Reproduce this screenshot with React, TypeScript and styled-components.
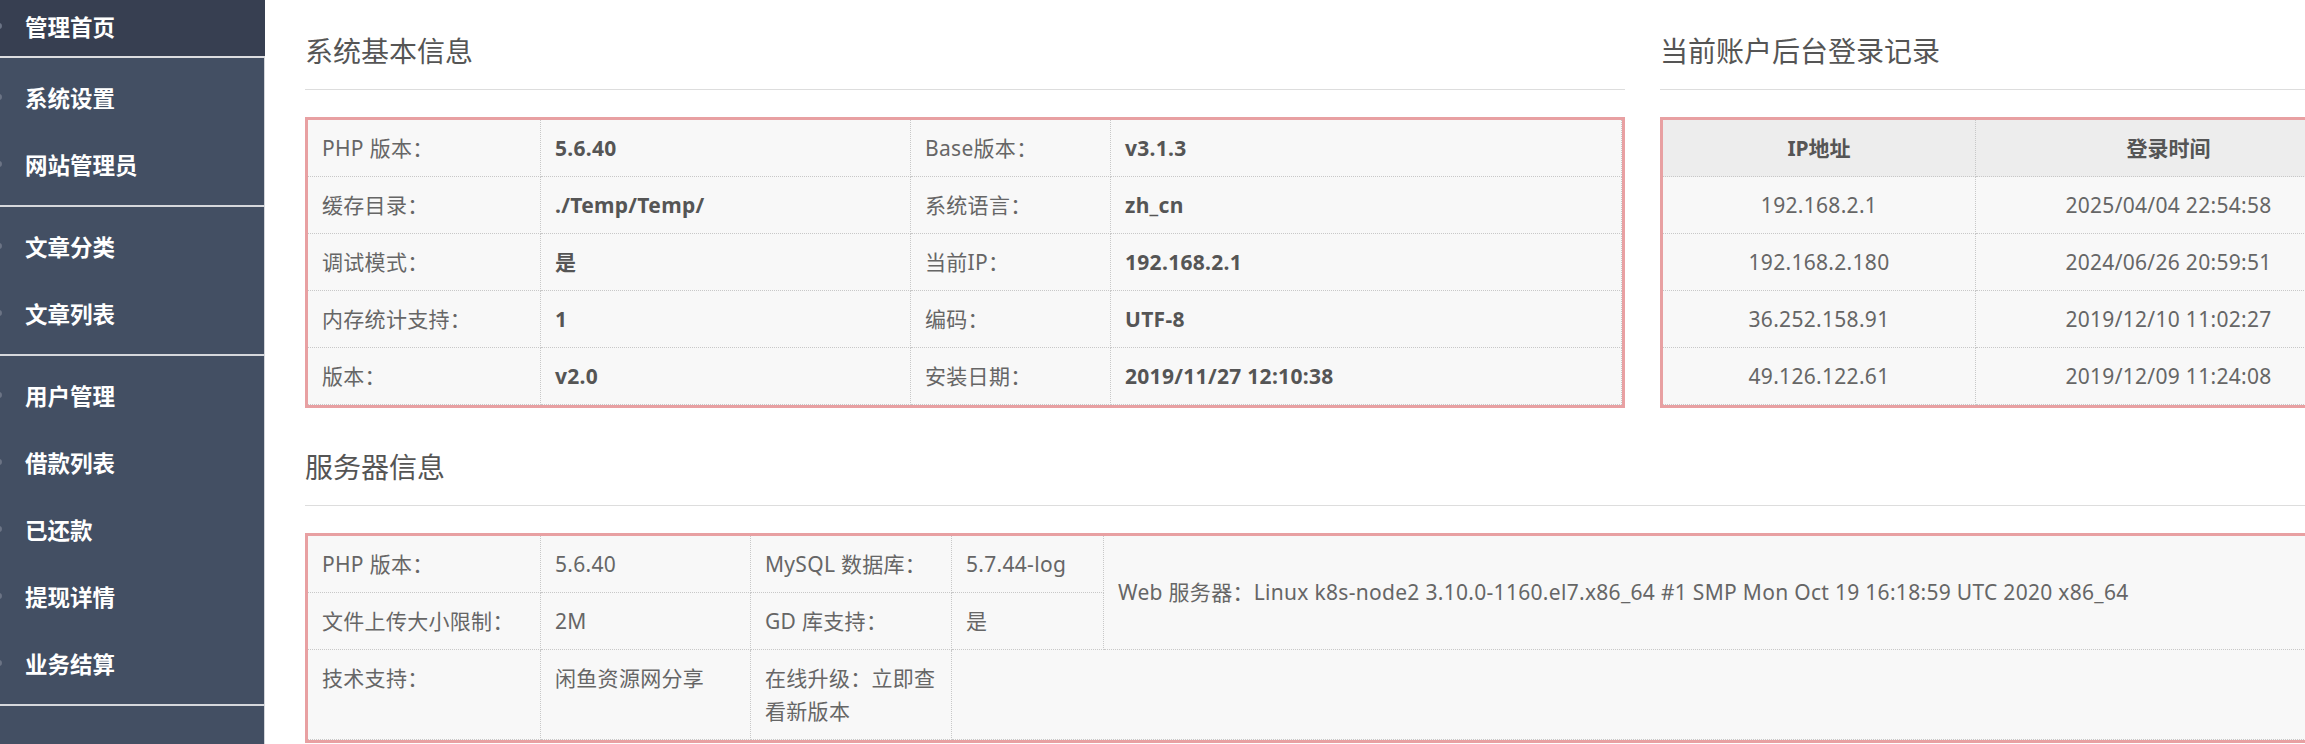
import React from 'react';
import styled, { createGlobalStyle } from 'styled-components';

const menuGroups = [
  ['系统设置', '网站管理员'],
  ['文章分类', '文章列表'],
  ['用户管理', '借款列表', '已还款', '提现详情', '业务结算'],
];

const sysInfo = [
  ['PHP 版本：', '5.6.40', 'Base版本：', 'v3.1.3'],
  ['缓存目录：', './Temp/Temp/', '系统语言：', 'zh_cn'],
  ['调试模式：', '是', '当前IP：', '192.168.2.1'],
  ['内存统计支持：', '1', '编码：', 'UTF-8'],
  ['版本：', 'v2.0', '安装日期：', '2019/11/27 12:10:38'],
];

const logins = [
  ['192.168.2.1', '2025/04/04 22:54:58'],
  ['192.168.2.180', '2024/06/26 20:59:51'],
  ['36.252.158.91', '2019/12/10 11:02:27'],
  ['49.126.122.61', '2019/12/09 11:24:08'],
];

const App = () => {
  return (
    <Page>
      <GlobalStyle />
      <Sidebar>
        <TopItem>
          <Stub />
          管理首页
        </TopItem>
        {menuGroups.map((group, i) => (
          <MenuGroup key={i}>
            {group.map((name) => (
              <MenuItem key={name}>
                <Stub />
                {name}
              </MenuItem>
            ))}
          </MenuGroup>
        ))}
      </Sidebar>

      <Main>
        <TopRow>
          <LeftCol>
            <Heading>系统基本信息</Heading>
            <InfoTable>
              <colgroup>
                <Col $w={233} />
                <Col $w={370} />
                <Col $w={200} />
                <col />
              </colgroup>
              <tbody>
                {sysInfo.map((row) => (
                  <tr key={row[0]}>
                    <Cell>{row[0]}</Cell>
                    <Cell $bold>{row[1]}</Cell>
                    <Cell>{row[2]}</Cell>
                    <Cell $bold>{row[3]}</Cell>
                  </tr>
                ))}
              </tbody>
            </InfoTable>
          </LeftCol>

          <RightCol>
            <Heading>当前账户后台登录记录</Heading>
            <InfoTable>
              <colgroup>
                <Col $w={313} />
                <col />
              </colgroup>
              <thead>
                <tr>
                  <HeadCell>IP地址</HeadCell>
                  <HeadCell>登录时间</HeadCell>
                </tr>
              </thead>
              <tbody>
                {logins.map((row) => (
                  <tr key={row[0]}>
                    <Cell $center>{row[0]}</Cell>
                    <Cell $center>{row[1]}</Cell>
                  </tr>
                ))}
              </tbody>
            </InfoTable>
          </RightCol>
        </TopRow>

        <ServerSection>
          <Heading>服务器信息</Heading>
          <InfoTable>
            <colgroup>
              <Col $w={233} />
              <Col $w={210} />
              <Col $w={201} />
              <Col $w={152} />
              <col />
            </colgroup>
            <tbody>
              <tr>
                <Cell>PHP 版本：</Cell>
                <Cell>5.6.40</Cell>
                <Cell>MySQL 数据库：</Cell>
                <Cell>5.7.44-log</Cell>
                <Cell rowSpan={2} $nowrap>
                  Web 服务器：Linux k8s-node2 3.10.0-1160.el7.x86_64 #1 SMP Mon Oct 19 16:18:59 UTC 2020 x86_64
                </Cell>
              </tr>
              <tr>
                <Cell>文件上传大小限制：</Cell>
                <Cell>2M</Cell>
                <Cell>GD 库支持：</Cell>
                <Cell>是</Cell>
              </tr>
              <tr>
                <Cell $top>技术支持：</Cell>
                <Cell $top>闲鱼资源网分享</Cell>
                <Cell $top>在线升级：立即查看新版本</Cell>
                <Cell colSpan={2} />
              </tr>
            </tbody>
          </InfoTable>
        </ServerSection>
      </Main>
    </Page>
  );
};

export default App;

const GlobalStyle = createGlobalStyle`
  html, body {
    margin: 0;
    padding: 0;
    overflow: hidden;
    background: #ffffff;
  }
  body {
    font-family: "Noto Sans", "Noto Sans CJK SC", sans-serif;
  }
`;

const Page = styled.div`
  display: flex;
  min-height: 100vh;
`;

const Sidebar = styled.aside`
  flex: 0 0 265px;
  background-color: #434f63;
  box-shadow: inset -1px 0 0 #d3d5da;
  overflow: hidden;
`;

const TopItem = styled.div`
  box-sizing: border-box;
  height: 58px;
  padding-bottom: 5px;
  display: flex;
  align-items: center;
  background-color: #373f51;
  border-bottom: 2px solid #dcdde0;
  color: #ffffff;
  font-family: "Noto Sans CJK SC", sans-serif;
  font-size: 22.5px;
  font-weight: 700;
`;

const MenuGroup = styled.div`
  padding: 8px 0 5px;
  border-bottom: 2px solid #d6d8dc;
`;

const MenuItem = styled.div`
  box-sizing: border-box;
  height: 67px;
  padding-bottom: 5px;
  display: flex;
  align-items: center;
  color: #ffffff;
  font-family: "Noto Sans CJK SC", sans-serif;
  font-size: 22.5px;
  font-weight: 700;
`;

const Stub = styled.span`
  width: 8px;
  height: 6px;
  border-radius: 3px;
  background-color: #6b7485;
  margin-left: -6px;
  margin-right: 23px;
`;

const Main = styled.main`
  flex: 1;
  min-width: 0;
  padding-left: 40px;
  overflow: hidden;
`;

const TopRow = styled.div`
  display: flex;
  gap: 35px;
  width: 2100px;
`;

const LeftCol = styled.section`
  flex: 0 0 1320px;
`;

const RightCol = styled.section`
  flex: 0 0 705px;
`;

const ServerSection = styled.section`
  width: 2100px;
  margin-top: 8px;
`;

const Heading = styled.h2`
  margin: 0;
  padding: 30px 0 17px;
  border-bottom: 1px solid #dddddd;
  color: #555555;
  font-size: 28px;
  font-weight: 400;
  line-height: 42px;
`;

const InfoTable = styled.table`
  width: 100%;
  margin-top: 27px;
  table-layout: fixed;
  border: 3px solid #e8a0a2;
  border-collapse: separate;
  border-spacing: 0;
  background-color: #f8f8f8;
`;

const Col = styled.col<{ $w: number }>`
  width: ${(p) => p.$w}px;
`;

const Cell = styled.td<{ $bold?: boolean; $center?: boolean; $nowrap?: boolean; $top?: boolean }>`
  padding: 11.5px 14px;
  border-right: 1px dotted #c8c8c8;
  border-bottom: 1px dotted #c8c8c8;
  color: ${(p) => (p.$bold ? '#555555' : '#666666')};
  font-size: 21px;
  font-weight: ${(p) => (p.$bold ? 700 : 400)};
  line-height: 33px;
  letter-spacing: 0.3px;
  text-align: ${(p) => (p.$center ? 'center' : 'left')};
  vertical-align: ${(p) => (p.$top ? 'top' : 'middle')};
  white-space: ${(p) => (p.$nowrap ? 'nowrap' : 'normal')};
`;

const HeadCell = styled.th`
  padding: 11.5px 14px;
  border-right: 1px dotted #c8c8c8;
  border-bottom: 1px dotted #c8c8c8;
  background-color: #ededed;
  color: #555555;
  font-size: 21px;
  font-weight: 700;
  line-height: 33px;
  text-align: center;
`;
